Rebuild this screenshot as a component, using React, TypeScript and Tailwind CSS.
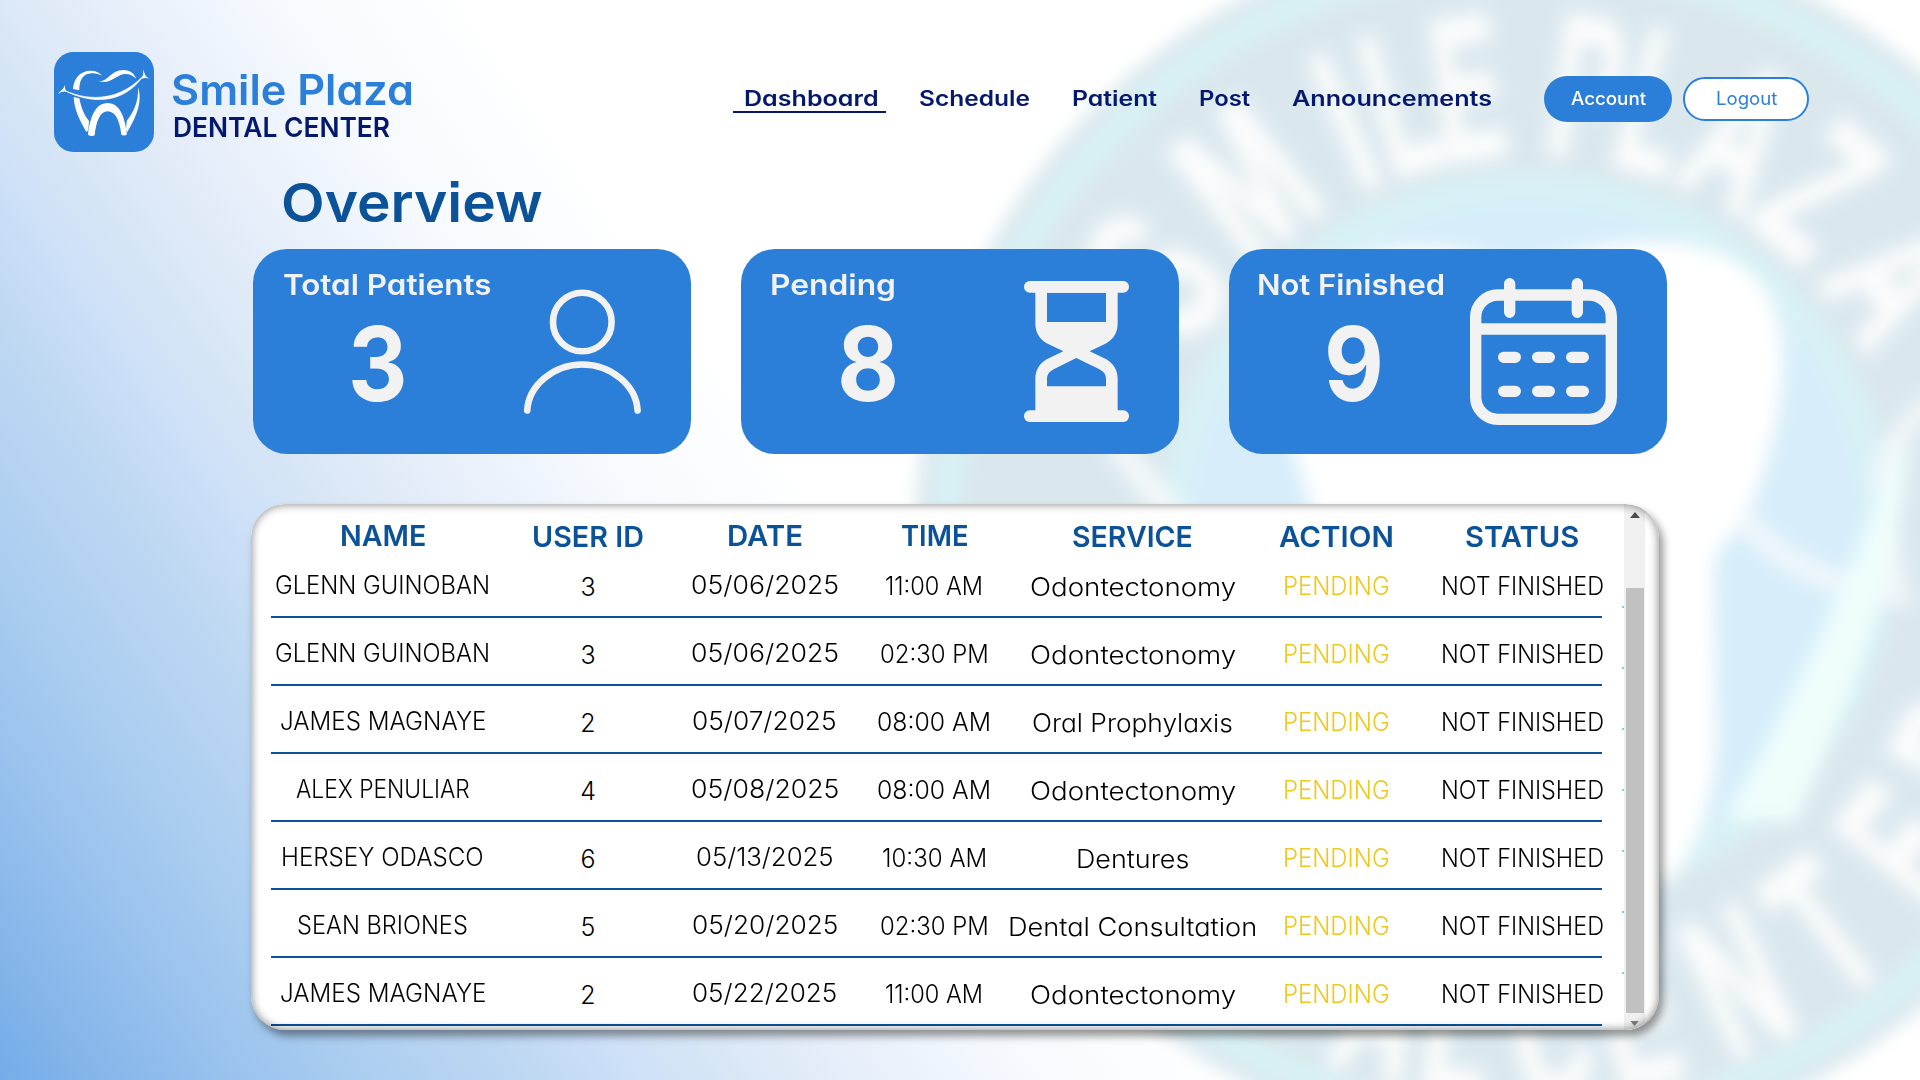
import { useLayoutEffect, useRef, type ReactNode } from 'react';

/* Text line stretched to an exact width. */
function Fit({ w, children, className = '' }: { w: number; children: string; className?: string }) {
  const ref = useRef<HTMLSpanElement>(null);
  useLayoutEffect(() => {
    const el = ref.current;
    if (!el) return;
    el.style.transform = `scaleX(${w / el.offsetWidth})`;
  }, [w, children]);
  return (
    <span className={`inline-block text-left ${className}`} style={{ width: w }}>
      <span ref={ref} className="inline-block origin-left whitespace-nowrap">
        {children}
      </span>
    </span>
  );
}

const sealTop: [string, number, number][] = [
  ['S', -54.5, 0.62], ['M', -38, 0.62], ['I', -23.5, 0.55], ['L', -16, 0.5], ['E', -7.5, 0.5],
  ['P', 7.5, 0.52], ['L', 16.5, 0.5], ['A', 28, 0.56], ['Z', 40, 0.6], ['A', 55, 0.62],
];
const sealBottom: [string, number][] = [
  ['R', -64], ['E', -51], ['T', -37.5], ['N', -25.5], ['E', -13], ['C', -3], ['L', 8], ['A', 17],
];

function Seal() {
  return (
    <svg className="absolute inset-0 h-full w-full" viewBox="0 0 1920 1080" aria-hidden="true">
      <defs>
        <filter id="soft" x="-10%" y="-10%" width="120%" height="120%">
          <feGaussianBlur stdDeviation="9" />
        </filter>
      </defs>
      <g filter="url(#soft)">
        <circle cx="1527" cy="540" r="612" fill="#dae8ee" />
        <circle cx="1527" cy="540" r="582" fill="none" stroke="#d8f2f5" strokeWidth="24" />
        <circle cx="1527" cy="540" r="352" fill="#d7eefa" stroke="#d8f2f6" strokeWidth="28" />
        <path
          d="M1290 310C1350 230 1450 240 1520 270C1610 235 1720 225 1765 290C1800 350 1775 440 1752 503C1740 530 1715 545 1713 570L1716 740Q1712 830 1670 880L1560 880L1500 640L1420 850C1350 760 1340 640 1310 500C1290 430 1260 380 1290 310Z"
          fill="#ffffff"
        />
        <path d="M1115 440C1150 490 1180 530 1230 560" fill="none" stroke="#f4f8fa" strokeWidth="24" />
        <path d="M1745 520C1780 565 1840 590 1910 596" fill="none" stroke="#f0f7fb" strokeWidth="22" />
        <path d="M1940 395C1900 430 1872 460 1886 500L1895 600" fill="none" stroke="#f1f6f9" strokeWidth="20" />
        <path d="M1902 440C1850 580 1790 710 1725 818L1795 822C1840 720 1895 600 1908 450Z" fill="#effefd" />
        <g fill="#fcfdfd" stroke="#fcfdfd" strokeWidth="5" fontFamily="Liberation Sans" fontWeight="bold" fontSize="202" textAnchor="middle">
          {sealTop.map(([c, a, s], i) => (
            <text key={i} transform={`translate(1527 540) rotate(${a}) translate(0 -386) scale(${s} 1)`}>{c}</text>
          ))}
          {sealBottom.map(([c, a], i) => (
            <text key={i} transform={`translate(1527 540) rotate(${a}) translate(0 558) scale(0.55 1)`}>{c}</text>
          ))}
        </g>
      </g>
    </svg>
  );
}

function Logo() {
  return (
    <svg className="h-[100px] w-[100px]" viewBox="0 0 300 300" aria-hidden="true">
      <rect width="300" height="300" rx="58" fill="#2b7fd9" />
      <g fill="#fff">
        <path d="M57 111C59 80 78 56 110 56C126 56 137 62 145 71C130 62 109 61 95 68C80 77 76 94 76 115Z" />
        <path d="M133 87C161 92 170 54 208 54C230 54 242 67 246 80C236 69 222 64 207 67C182 73 166 99 133 87Z" />
        <path d="M33 116C110 150 200 145 269 70C209 159 110 156 33 116Z" stroke="#fff" strokeWidth="2" />
        <path d="M33 98C33 109 34 116 38 120C30 117 21 119 13 126C18 115 30 112 33 98Z" />
        <path d="M269 52C270 65 276 77 288 81C279 78 271 76 264 81C268 72 267 62 269 52Z" />
        <path d="M59 135L76 139C82 170 91 190 105 207L103 235L97 240C78 207 60 172 59 135Z" />
        <path d="M252 106C266 145 250 190 220 240L216 234L218 207C239 180 254 150 252 106Z" />
        <path d="M102 248C108 197 123 153 161 153C198 153 213 197 219 247C213 252 206 251 202 248C197 205 184 178 161 178C138 178 127 207 122 250C115 253 108 252 102 248Z" />
      </g>
    </svg>
  );
}

function PersonIcon() {
  return (
    <svg className="h-[130px] w-[122px]" viewBox="0 0 122 130" fill="none" stroke="#f2f2f2" strokeWidth="6.6" strokeLinecap="round" aria-hidden="true">
      <circle cx="61.3" cy="33" r="29.3" />
      <path d="M6.200 121.500C7.500 97 32 75.500 61.300 75.500S115.300 97 116.600 121.500" />
    </svg>
  );
}

function HourglassIcon() {
  return (
    <svg className="h-[141px] w-[105px]" viewBox="0 0 315 423" fill="#f2f2f2" aria-hidden="true">
      <rect width="315" height="35" rx="17" />
      <rect y="388" width="315" height="35" rx="17" />
      <path
        fillRule="evenodd"
        d="M34 20H281V127C281 154 269 174 247 187L197 211L247 235C269 248 281 268 281 293V400H34V293C34 268 46 248 68 235L118 211L68 187C46 174 34 154 34 127ZM69 35V123H246V35ZM157 231L89 265C75 272 69 281 69 295V316H246V295C246 281 240 272 226 265Z"
      />
    </svg>
  );
}

function CalendarIcon() {
  return (
    <svg className="h-[147px] w-[147px]" viewBox="0 0 441 441" fill="none" stroke="#f2f2f2" strokeWidth="34" strokeLinecap="round" aria-hidden="true">
      <rect x="17" y="51" width="407" height="373" rx="67" />
      <path d="M17 153H424" strokeLinecap="butt" />
      <path d="M119 17V103M322 17V103M101 238H136M203 238H238M305 238H340M101 340H136M203 340H238M305 340H340" />
    </svg>
  );
}

function Card({ label, w, value, vw, labelPad, valuePad, iconPad, children }: {
  label: string; w: number; value: string; vw: number; labelPad: string; valuePad: string; iconPad: string; children: ReactNode;
}) {
  return (
    <section className="flex h-[205px] w-[438px] justify-between rounded-[34px] bg-[#2b7fd9] text-[#f2f2f2]">
      <div className="flex flex-col">
        <h2 className={`pt-[17px] text-[28.5px] leading-[37px] font-semibold ${labelPad}`}>
          <Fit w={w}>{label}</Fit>
        </h2>
        <p className={`pt-[9px] text-[103px] leading-[104px] font-bold ${valuePad}`}><Fit w={vw}>{value}</Fit></p>
      </div>
      <div className={iconPad}>{children}</div>
    </section>
  );
}

const nav: [string, number][] = [['Schedule', 111], ['Patient', 85], ['Post', 51], ['Announcements', 200]];

const heads: [string, number, string][] = [
  ['NAME', 86, 'pb-[2px]'], ['USER ID', 112, ''], ['DATE', 76, 'pb-[2px]'], ['TIME', 67, 'pb-[2px]'],
  ['SERVICE', 121, ''], ['ACTION', 115, ''], ['STATUS', 114, ''],
];

type Row = { name: string; nw: number; id: string; date: string; dw: number; time: string; tw: number; service: string; sw: number };
const rows: Row[] = [
  { name: 'GLENN GUINOBAN', nw: 215, id: '3', date: '05/06/2025', dw: 148, time: '11:00 AM', tw: 98, service: 'Odontectonomy', sw: 206 },
  { name: 'GLENN GUINOBAN', nw: 215, id: '3', date: '05/06/2025', dw: 148, time: '02:30 PM', tw: 109, service: 'Odontectonomy', sw: 206 },
  { name: 'JAMES MAGNAYE', nw: 206, id: '2', date: '05/07/2025', dw: 145, time: '08:00 AM', tw: 114, service: 'Oral Prophylaxis', sw: 201 },
  { name: 'ALEX PENULIAR', nw: 174, id: '4', date: '05/08/2025', dw: 148, time: '08:00 AM', tw: 114, service: 'Odontectonomy', sw: 206 },
  { name: 'HERSEY ODASCO', nw: 203, id: '6', date: '05/13/2025', dw: 138, time: '10:30 AM', tw: 105, service: 'Dentures', sw: 113 },
  { name: 'SEAN BRIONES', nw: 171, id: '5', date: '05/20/2025', dw: 146, time: '02:30 PM', tw: 109, service: 'Dental Consultation', sw: 249 },
  { name: 'JAMES MAGNAYE', nw: 206, id: '2', date: '05/22/2025', dw: 145, time: '11:00 AM', tw: 98, service: 'Odontectonomy', sw: 206 },
];

const cols = 'grid grid-cols-[223px_188px_165px_174px_223px_184px_188px] justify-items-center';

export default function App() {
  return (
    <main className="relative h-[1080px] w-[1920px] overflow-hidden bg-white bg-[linear-gradient(55deg,#76ace8_0%,#9cc4ee_9.5%,#b0d0f1_15%,#bdd7f2_19.5%,#cee1f8_24%,#d9e7f5_27.5%,#e7effa_32.5%,#f5f9fe_38%,#ffffff_46%)] font-['Inter',sans-serif] text-black [font-feature-settings:'cv11','ss07']">
      <Seal />
      <div className="relative">
        <header className="flex h-[152px] pl-[54px]">
          <div className="pt-[52px]"><Logo /></div>
          <div className="w-[579px] pt-[65px] pl-[17px]">
            <div className="h-[48px] text-[42px] leading-[50px] font-semibold text-[#2b7fd9]"><Fit w={243}>Smile Plaza</Fit></div>
            <div className="pl-[2px] text-[27px] leading-[30px] font-semibold text-[#04196d]"><Fit w={217}>DENTAL CENTER</Fit></div>
          </div>
          <nav className="flex pt-[85px] text-[21px] leading-[28px] font-semibold text-[#04196d]">
            <a className="flex h-[28px] w-[153px] justify-center border-b-2 border-[#04196d] pl-[3px]"><Fit w={135}>Dashboard</Fit></a>
            <div className="flex gap-[42px] pl-[33px]">
              {nav.map(([t, w]) => (
                <a key={t}><Fit w={w}>{t}</Fit></a>
              ))}
            </div>
          </nav>
          <div className="ml-[52px] flex gap-[11px] pt-[76px] text-[18px]">
            <button className="h-[46px] w-[128px] rounded-full bg-[#2b7fd9] leading-[44px] font-medium text-white"><Fit w={75}>Account</Fit></button>
            <button className="mt-px h-[44px] w-[126px] rounded-full border-2 border-[#2b7fd9] bg-white leading-[36px] text-[#2b7fd9]"><Fit w={61}>Logout</Fit></button>
          </div>
        </header>
        <h1 className="h-[97px] pt-[20px] pl-[281px] text-[54px] leading-[62px] font-semibold text-[#0b5299]"><Fit w={262}>Overview</Fit></h1>
        <div className="flex gap-[50px] pl-[253px]">
          <Card label="Total Patients" w={208} value="3" vw={60} labelPad="pl-[30px]" valuePad="pl-[95px]" iconPad="pt-[40px] pr-[48px]"><PersonIcon /></Card>
          <Card label="Pending" w={126} value="8" vw={62} labelPad="pl-[29px]" valuePad="pl-[96px]" iconPad="pt-[32px] pr-[50px]"><HourglassIcon /></Card>
          <Card label="Not Finished" w={188} value="9" vw={60} labelPad="pl-[28px]" valuePad="pl-[95px]" iconPad="pt-[29px] pr-[50px]"><CalendarIcon /></Card>
        </div>
        <section className="relative mt-[50px] ml-[251px] flex h-[526px] w-[1408px] overflow-hidden rounded-[34px] bg-white shadow-[4px_6px_9px_rgba(0,0,0,0.42)]">
          <div className="w-[1373px] pl-[20px]">
            <div className={`${cols} h-[46px] w-[1331px] pt-[14px] text-[29px] leading-[38px] font-semibold text-[#0b5299]`}>
              {heads.map(([t, w, p]) => (
                <div key={t} className={`flex h-[38px] items-center ${p}`}><Fit w={w}>{t}</Fit></div>
              ))}
            </div>
            {rows.map((r, i) => (
              <div key={i} className={`${cols} h-[68px] w-[1331px] items-center border-b-2 border-[#0b5299] pt-[7px] text-[25px] font-[330]`}>
                <div className="pb-[2px]"><Fit w={r.nw}>{r.name}</Fit></div>
                <div className="pt-[2px]">{r.id}</div>
                <div className="pb-[2px]"><Fit w={r.dw}>{r.date}</Fit></div>
                <Fit w={r.tw}>{r.time}</Fit>
                <div className="pt-[2px]"><Fit w={r.sw}>{r.service}</Fit></div>
                <div className="text-[#edc81d]"><Fit w={107}>PENDING</Fit></div>
                <Fit w={163}>NOT FINISHED</Fit>
              </div>
            ))}
          </div>
          <div className="flex w-[21px] flex-col items-center bg-[#f0f0f0]">
            <svg className="mt-[8px] h-[6px] w-[10px]" viewBox="0 0 10 6"><path d="M5 0L10 6H0Z" fill="#4d4d4d" /></svg>
            <div className="mt-[70px] h-[425px] w-[18px] bg-[#c1c1c1]" />
            <svg className="mt-[8px] h-[5px] w-[9px]" viewBox="0 0 10 6"><path d="M5 6L10 0H0Z" fill="#7d7d7d" /></svg>
          </div>
          <div className="absolute inset-0 flex flex-col gap-[59px] rounded-[34px] pt-[102px] pl-[1371px] shadow-[inset_0_0_8px_1px_rgba(0,0,0,0.42)]">
            {rows.map((r, i) => (
              <i key={i} className="h-[2px] w-[2px] bg-[#8cc8de]" />
            ))}
          </div>
        </section>
      </div>
    </main>
  );
}
